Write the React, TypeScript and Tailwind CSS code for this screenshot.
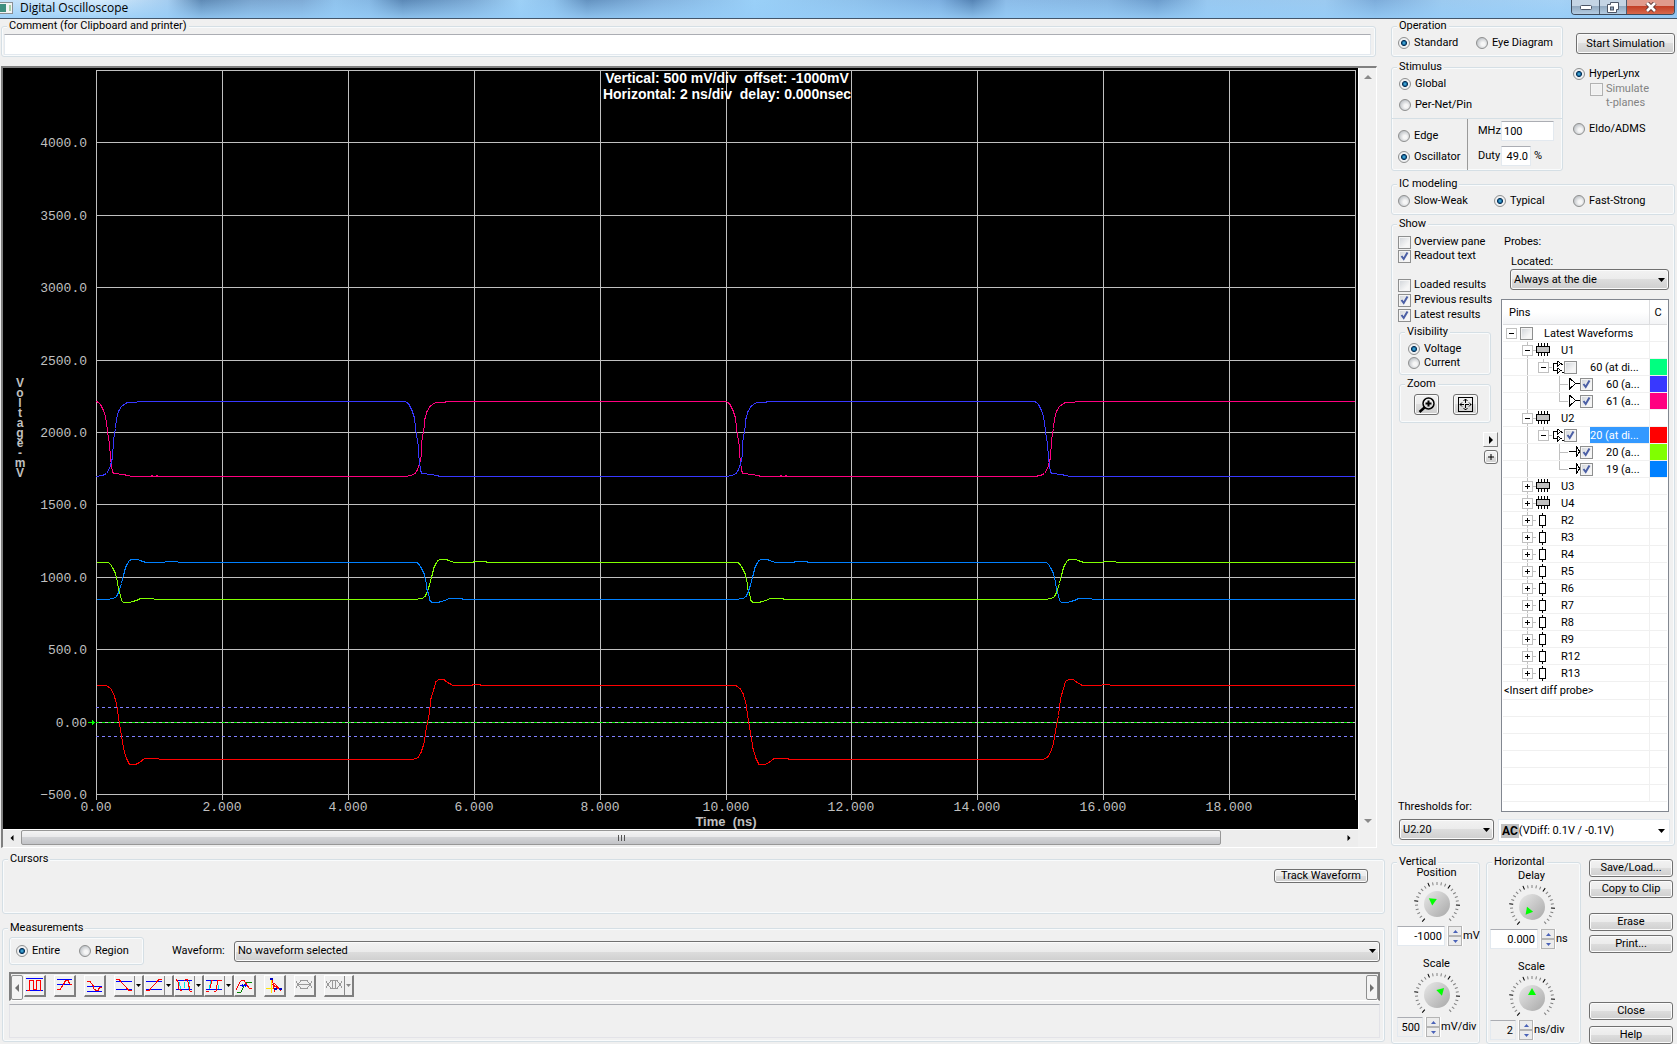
import React from 'react';
import clsx from 'clsx';

type Point = [number, number];

/* ---------- small form parts ---------- */

interface GroupProps {
  title?: string;
  className?: string;
  inner?: string;
  children?: React.ReactNode;
}

const Group: React.FC<GroupProps> = ({ title, className, inner, children }) => (
  <fieldset className={clsx('min-w-0 rounded-[3px] border border-[#d5dfe5] shadow-[inset_0_0_0_1px_#f9fbfc]', className)}>
    {title && <legend className="ml-[5px] bg-[#f0f0f0] px-0.5 leading-[14px]">{title}</legend>}
    <div className={inner}>{children}</div>
  </fieldset>
);

interface ChoiceProps {
  name?: string;
  label?: string;
  ariaLabel?: string;
  checked?: boolean;
  disabled?: boolean;
  className?: string;
}

const Radio: React.FC<ChoiceProps> = ({ name, label, checked, className }) => (
  <label className={clsx('flex h-[14px] shrink-0 items-center gap-1 whitespace-nowrap', className)}>
    <input
      type="radio"
      name={name}
      defaultChecked={checked}
      className="size-3 shrink-0 appearance-none rounded-full border border-[#8e8f8f] bg-[radial-gradient(circle_at_60%_60%,#f6f6f6_20%,#c4c8cc_70%)] checked:bg-[radial-gradient(circle,#5cc8ee_0,#0d5c93_26%,#0b2c4c_38%,#eef0f2_46%)]"
    />
    {label}
  </label>
);

const Check: React.FC<ChoiceProps> = ({ label, ariaLabel, checked, disabled, className }) => (
  <label className={clsx('flex items-center gap-[3px] whitespace-nowrap', disabled && 'text-[#838383]', className)}>
    <span className="grid size-[13px] shrink-0">
      <input
        type="checkbox"
        aria-label={ariaLabel}
        defaultChecked={checked}
        disabled={disabled}
        className="peer col-start-1 row-start-1 size-[13px] appearance-none border border-[#8e8f8f] bg-[linear-gradient(135deg,#cfd3d8,#f6f6f6_70%)] shadow-[inset_0_0_0_1px_#f4f4f4] disabled:border-[#b1b1b1] disabled:bg-none"
      />
      <svg viewBox="0 0 13 13" className="pointer-events-none invisible col-start-1 row-start-1 size-[13px] peer-checked:visible">
        <path d="M3.5 6 L5.700 9 L9.500 2.500" fill="none" stroke="#4b5fa5" strokeWidth="2" />
      </svg>
    </span>
    {label}
  </label>
);

interface ButtonProps {
  className?: string;
  ariaLabel?: string;
  children?: React.ReactNode;
}

const Button: React.FC<ButtonProps> = ({ className, ariaLabel, children }) => (
  <button
    aria-label={ariaLabel}
    className={clsx(
      'flex items-center justify-center whitespace-nowrap rounded-[3px] border border-[#707070] bg-[linear-gradient(#f2f2f2,#ebebeb_50%,#dddddd_50%,#cfcfcf)] shadow-[inset_0_0_0_1px_#fbfbfb]',
      className
    )}
  >
    {children}
  </button>
);

interface DropDownProps {
  id?: string;
  ariaLabel?: string;
  value: string;
  flat?: boolean;
  className?: string;
}

const DropDown: React.FC<DropDownProps> = ({ id, ariaLabel, value, flat, className }) => (
  <div className={clsx('grid h-[21px]', className)}>
    <select
      id={id}
      aria-label={ariaLabel}
      className={clsx(
        'col-start-1 row-start-1 h-full w-full min-w-0 appearance-none',
        flat
          ? 'bg-white'
          : 'rounded-[3px] border border-[#707070] bg-[linear-gradient(#f2f2f2,#ebebeb_50%,#dddddd_50%,#cfcfcf)] pl-[3px] shadow-[inset_0_0_0_1px_#fbfbfb]'
      )}
    >
      <option>{value}</option>
    </select>
    <svg viewBox="0 0 7 4" className="pointer-events-none col-start-1 row-start-1 mr-1 h-1 w-[7px] place-self-center justify-self-end">
      <path d="M0 0H7L3.5 4Z" />
    </svg>
  </div>
);

/* ---------- waveform plot ---------- */

const PLOT_W = 1355;
const PLOT_H = 761;
const LEFT = 93;
const RIGHT = 1352;
const PERIOD = 629.5;
const HIGH_TIME = 308.5;

const GRID_X = [93, 219, 345, 471, 597, 723, 848, 974, 1100, 1226, 1352];
const GRID_Y = [2, 74, 147, 219, 292, 364, 436, 509, 581, 654, 726];
const Y_LABELS = ['', '4000.0', '3500.0', '3000.0', '2500.0', '2000.0', '1500.0', '1000.0', '500.0', '0.00', '−500.0'];
const X_LABELS = ['0.00', '2.000', '4.000', '6.000', '8.000', '10.000', '12.000', '14.000', '16.000', '18.000'];

const DRIVER_FALL: Point[] = [[0, 333], [2, 334], [4, 336], [5, 338], [7, 342], [9, 348], [10, 354], [11, 363], [13, 375], [14, 389], [15, 397], [16, 403], [17, 405], [27, 406], [31, 407], [36, 408]];
const DRIVER_RISE: Point[] = [[0, 408], [6, 407], [10, 405], [12, 402], [14, 397], [16, 389], [17, 372], [19, 360], [20, 350], [22, 343], [25, 338], [29, 335], [31, 334], [40, 334], [41, 333]];
const PIN_FALL: Point[] = [[0, 494], [12, 494], [14, 496], [16, 499], [19, 505], [21, 513], [22, 521], [24, 527], [25, 532], [27, 534], [33, 534], [36, 533], [40, 532], [44, 530], [57, 530], [58, 531]];
const PIN_RISE: Point[] = [[0, 531], [10, 531], [17, 530], [20, 528], [22, 524], [25, 515], [27, 507], [29, 499], [31, 495], [33, 492], [35, 491], [41, 491], [44, 492], [46, 493], [50, 494], [68, 494], [69, 493], [81, 493], [82, 494]];
const DIFF_FALL: Point[] = [[0, 617], [10, 617], [14, 620], [17, 625], [20, 635], [22, 649], [25, 667], [27, 680], [30, 690], [33, 696], [39, 696], [43, 694], [48, 690], [62, 690], [63, 691]];
const DIFF_RISE: Point[] = [[0, 691], [8, 691], [13, 689], [16, 684], [19, 675], [21, 662], [24, 647], [26, 630], [29, 620], [31, 613], [34, 611], [39, 611], [41, 613], [48, 617], [67, 617], [68, 616], [75, 616], [76, 617]];

// edges alternate: first at every period start, second after the high time
const trace = (first: Point[], second: Point[]) => {
  const pts: string[] = [];
  for (let k = 0; k < 2; k++) {
    const start = LEFT + k * PERIOD;
    first.forEach(([x, y]) => pts.push(`${start + x + 0.5},${y + 0.5}`));
    second.forEach(([x, y]) => pts.push(`${start + HIGH_TIME + x + 0.5},${y + 0.5}`));
  }
  const last = second[second.length - 1];
  pts.push(`${RIGHT},${last[1] + 0.5}`);
  return pts.join(' ');
};

const TRACES = [
  { color: '#ff0080', points: trace(DRIVER_FALL, DRIVER_RISE) },
  { color: '#3838ff', points: trace(DRIVER_RISE, DRIVER_FALL) },
  { color: '#80ff00', points: trace(PIN_FALL, PIN_RISE) },
  { color: '#0080ff', points: trace(PIN_RISE, PIN_FALL) },
  { color: '#ff0000', points: trace(DIFF_FALL, DIFF_RISE) },
];

const Plot: React.FC = () => (
  <svg viewBox={`0 0 ${PLOT_W} ${PLOT_H}`} className="block w-full bg-black">
    <g stroke="#c0c0c0" shapeRendering="crispEdges">
      {GRID_X.map(x => <line key={x} x1={x + 0.5} x2={x + 0.5} y1="2" y2="732" />)}
      {GRID_Y.map(y => <line key={y} x1={LEFT} x2={RIGHT} y1={y + 0.5} y2={y + 0.5} />)}
    </g>
    <g fill="none" shapeRendering="crispEdges">
      <path d={`M${LEFT} 639.5H${RIGHT}M${LEFT} 668.5H${RIGHT}`} stroke="#8080ff" strokeDasharray="3 3" />
      <path d={`M${LEFT} 654.5H${RIGHT}`} stroke="#00ff00" strokeDasharray="3 3" />
      <path d="M85 654.5H92M89.5 652V657M90.5 653V656" stroke="#00ff00" />
      {TRACES.map(t => <polyline key={t.color} points={t.points} stroke={t.color} />)}
      <path d="M148 407.5h2M153 407.5h2M777 407.5h2M782 407.5h2" stroke="#ff0080" />
    </g>
    <g fill="#c0c0c0" className="font-['Liberation_Mono',monospace] text-[13px]">
      {GRID_Y.map((y, i) => <text key={y} x="84" y={y + 5} textAnchor="end">{Y_LABELS[i]}</text>)}
      {X_LABELS.map((label, i) => <text key={label} x={GRID_X[i]} y="743" textAnchor="middle">{label}</text>)}
    </g>
    <g fill="#c0c0c0" textAnchor="middle" className="font-['Liberation_Sans',sans-serif] text-[13px] font-bold">
      {'Voltage-mV'.split('').map((ch, i) => <text key={i} x="17" y={319 + i * 10} className="text-[12px]">{ch}</text>)}
      <text x="723" y="758">{'Time\u00a0 (ns)'}</text>
    </g>
    <g fill="#ffffff" textAnchor="middle" className="font-['Liberation_Sans',sans-serif] text-[14px] font-bold">
      <text x="724" y="15">{'Vertical: 500 mV/div\u00a0 offset: -1000mV'}</text>
      <text x="724" y="31">{'Horizontal: 2 ns/div\u00a0 delay: 0.000nsec'}</text>
    </g>
  </svg>
);

/* ---------- measurement toolbar ---------- */

interface Tool {
  name: string;
  split?: boolean;
  gap?: boolean;
  muted?: boolean;
  art: { d: string; color: string }[];
}

const TOOLS: Tool[] = [
  { name: 'Peak to peak', gap: true, art: [{ d: 'M1 2.5H18M1 14.5H18', color: '#0000ff' }, { d: 'M2 14.5H4.500V4.500H8.500V13.500H11.500V4.500H15.500V14.500', color: '#ff0000' }] },
  { name: 'Overshoot high', gap: true, art: [{ d: 'M2 3.5H17M2 8.500H17', color: '#0000ff' }, { d: 'M2 13.5H5L9 7.5L10.500 4.500H13L14.500 7.5L17 9', color: '#ff0000' }] },
  { name: 'Overshoot low', gap: true, art: [{ d: 'M2 10.5H17M2 15.5H17', color: '#0000ff' }, { d: 'M2 5.5H5L8 9.5L9 13L11 14.5H13L14.5 11.5L17 11', color: '#ff0000' }] },
  { name: 'Fall time', split: true, art: [{ d: 'M1 5.5H17M1 13.500H17', color: '#0000ff' }, { d: 'M1 3.500H4L14 14.5H17', color: '#ff0000' }] },
  { name: 'Rise time', split: true, art: [{ d: 'M1 5.5H17M1 13.500H17', color: '#0000ff' }, { d: 'M1 14.5H4L14 3.5H17', color: '#ff0000' }] },
  { name: 'Period', split: true, art: [{ d: 'M4.500 6L5.500 14M9 6V12M14.500 5L13 14', color: '#00e8e8' }, { d: 'M1 4.500H17M1 13.5H17', color: '#0000ff' }, { d: 'M1 3L3 6L4 13L7 15M9 5L11 3H12L13 6L15 15H17', color: '#ff0000' }] },
  { name: 'Pulse width', split: true, art: [{ d: 'M5.500 5L4.500 13M12.500 5L13.500 13', color: '#00e8e8' }, { d: 'M1 4.500H17M1 13.5H17', color: '#0000ff' }, { d: 'M1 15H4M5 12L7 4H8M9 15H11L13 4H17', color: '#ff0000' }] },
  { name: 'Delay', gap: true, art: [{ d: 'M2 16H6L9 10L12 6H17', color: '#008000' }, { d: 'M5 9.5H12M7 8V11M10 8V11', color: '#0000ff' }, { d: 'M1 14L5 6L7 4H9L12 9L14 12H17', color: '#ff0000' }] },
  { name: 'Crossing', gap: true, art: [{ d: 'M6.500 3V17M1 12.500H17', color: '#ffe600' }, { d: 'M7 3L10 16L8 9L14 13M9 7L16 15', color: '#ff0000' }, { d: 'M5 2.500H8M5 3.500H8M9 12.500H12M9 13.500H12M14 12.500H17M14 13.500H17', color: '#0000c0' }] },
  { name: 'Eye width', gap: true, muted: true, art: [{ d: 'M1 5L3 8.500L1 12M17 5L15 8.500L17 12M3 8.500L6 4.500H12L15 8.500L12 12.500H6L3 8.500M4 8.5H14', color: '#9a9a9a' }] },
  { name: 'Eye height', split: true, muted: true, art: [{ d: 'M1 5L3 8.500L1 12M17 5L15 8.500L17 12M3 8.500L6 4.500H12L15 8.500L12 12.500H6L3 8.500M7.500 5V12M10.500 5V12', color: '#9a9a9a' }] },
];

const ToolButton: React.FC<{ tool: Tool }> = ({ tool }) => (
  <button
    aria-label={tool.name}
    className={clsx(
      'flex h-[22px] border-r-2 border-b-2 border-[#7f7f7f] border-t border-l border-t-white border-l-white',
      tool.split ? 'w-[30px]' : 'w-[22px]',
      tool.gap && 'mr-2'
    )}
  >
    <svg viewBox="0 0 19 19" className="size-[19px] shrink-0" shapeRendering="crispEdges" fill="none">
      {tool.art.map(a => <path key={a.d} d={a.d} stroke={a.color} />)}
    </svg>
    {tool.split && (
      <svg viewBox="0 0 8 19" className="h-[19px] w-2 shrink-0">
        <path d="M0.500 0V19" stroke="#8a8a8a" />
        <path d="M2 8H7L4.500 11Z" fill={tool.muted ? '#888888' : '#000000'} />
      </svg>
    )}
  </button>
);

/* ---------- probe tree ---------- */

type Icon = 'chip' | 'diff' | 'out' | 'in' | 'res';

interface Pin {
  level: number;
  label: string;
  icon?: Icon;
  open?: boolean;
  leaf?: boolean;
  end?: boolean;
  check?: boolean;
  color?: string;
  selected?: boolean;
}

const PINS: Pin[] = [
  { level: 0, label: 'Latest Waveforms', open: true, check: false },
  { level: 1, label: 'U1', icon: 'chip', open: true },
  { level: 2, label: '60 (at di...', icon: 'diff', open: true, check: false, color: '#00ff80' },
  { level: 3, label: '60 (a...', icon: 'out', leaf: true, check: true, color: '#3838ff' },
  { level: 3, label: '61 (a...', icon: 'out', leaf: true, end: true, check: true, color: '#ff0080' },
  { level: 1, label: 'U2', icon: 'chip', open: true },
  { level: 2, label: '20 (at di...', icon: 'diff', open: true, check: true, color: '#ff0000', selected: true },
  { level: 3, label: '20 (a...', icon: 'in', leaf: true, check: true, color: '#80ff00' },
  { level: 3, label: '19 (a...', icon: 'in', leaf: true, end: true, check: true, color: '#0080ff' },
  { level: 1, label: 'U3', icon: 'chip' },
  { level: 1, label: 'U4', icon: 'chip' },
  ...['R2', 'R3', 'R4', 'R5', 'R6', 'R7', 'R8', 'R9', 'R12', 'R13'].map(label => ({ level: 1, label, icon: 'res' as Icon })),
];

const ICONS: Record<Icon, React.ReactNode> = {
  chip: (
    <svg viewBox="0 0 14 17" className="h-[17px] w-[14px] shrink-0" shapeRendering="crispEdges">
      <path d="M2.500 1V14M5.500 1V14M8.500 1V14M11.500 1V14" stroke="#000" />
      <rect x="0.500" y="4.500" width="13" height="6" fill="#c0c0c0" stroke="#000" />
    </svg>
  ),
  res: (
    <svg viewBox="0 0 14 17" className="h-[17px] w-[14px] shrink-0" shapeRendering="crispEdges">
      <path d="M6.500 1V4M6.500 14V17" stroke="#000" />
      <rect x="3.500" y="3.500" width="6" height="10" fill="#fff" stroke="#000" />
    </svg>
  ),
  diff: (
    <svg viewBox="0 0 12 17" className="h-[17px] w-3 shrink-0" shapeRendering="crispEdges">
      <path d="M6 4.500H1.500V11.500H6M5.500 2V7L9 4.500L5.500 2M5.500 9V14L9 11.500L5.500 9M9 5.500H11M10 13.500H12" fill="none" stroke="#000" />
    </svg>
  ),
  out: (
    <svg viewBox="0 0 12 17" className="h-[17px] w-3 shrink-0" shapeRendering="crispEdges">
      <path d="M1.500 2V13L7.500 7.500L1.500 2M8 7.500H12" fill="none" stroke="#000" />
    </svg>
  ),
  in: (
    <svg viewBox="0 0 12 17" className="h-[17px] w-3 shrink-0" shapeRendering="crispEdges">
      <path d="M1 7.500H8M8.500 2V13L11.500 7.500L8.500 2" fill="none" stroke="#000" />
    </svg>
  ),
};

const ROW_GUIDES = [
  '', // Latest Waveforms
  'M24.500 0V17M29 8.500H33',
  'M24.500 0V17M40.500 0V8M45 8.500H49',
  'M24.500 0V17M56.500 0V17M56 8.500H65',
  'M24.500 0V17M56.500 0V8.500H65',
];

const PinLead: React.FC<{ pin: Pin }> = ({ pin }) => {
  const width = 17 + pin.level * 16;
  const box = 3.5 + pin.level * 16;
  const guide = pin.leaf && pin.end ? ROW_GUIDES[4] : ROW_GUIDES[pin.level];
  return (
    <svg viewBox={`0 0 ${width} 17`} className="h-[17px] shrink-0" shapeRendering="crispEdges" fill="none">
      <path d={guide} stroke="#c0c0c0" />
      {!pin.leaf && (
        <>
          <rect x={box} y="3.5" width="10" height="10" fill="#fff" stroke="#c0c0c0" />
          <path d={pin.open ? `M${box + 2.5} 8.500H${box + 7.5}` : `M${box + 2.5} 8.500H${box + 7.5}M${box + 5} 6V11`} stroke="#000" />
        </>
      )}
    </svg>
  );
};

const EMPTY_ROWS = [0, 1, 2, 3, 4, 5];

const PinTable: React.FC = () => (
  <div className="h-[513px] w-[168px] overflow-hidden border border-[#828790] bg-white px-px">
    <table className="w-full table-fixed border-collapse">
      <colgroup>
        <col />
        <col className="w-[18px]" />
      </colgroup>
      <thead>
        <tr className="h-6 bg-[linear-gradient(#ffffff,#ffffff_50%,#f3f4f6)]">
          <th className="border-r border-b border-[#dcdddf] p-0 pl-1.5 pt-0.5 text-left font-normal">Pins</th>
          <th className="border-b border-[#dcdddf] p-0 pl-[5px] pt-0.5 text-left font-normal">C</th>
        </tr>
      </thead>
      <tbody>
        {PINS.map(pin => (
          <tr key={pin.label} className="h-[17px]">
            <td className="overflow-hidden border-r border-b border-[#f0f0f0] p-0">
              <div className="-mb-px flex h-[17px] items-center">
                <PinLead pin={pin} />
                {pin.icon && ICONS[pin.icon]}
                {pin.check !== undefined && <Check checked={pin.check} ariaLabel={`Show ${pin.label}`} />}
                <span
                  className={clsx(
                    'h-4 flex-1 whitespace-nowrap leading-[17px]',
                    pin.level > 1 ? 'ml-[13px]' : 'ml-[11px]',
                    pin.selected && 'bg-[#3399ff] text-white'
                  )}
                >
                  {pin.label}
                </span>
              </div>
            </td>
            <td className="border-b border-[#f0f0f0] p-0" style={pin.color ? { backgroundColor: pin.color } : undefined} />
          </tr>
        ))}
        <tr className="h-[17px]">
          <td className="overflow-hidden border-r border-b border-[#f0f0f0] p-0 pl-px pt-px leading-4 whitespace-nowrap">&lt;Insert diff probe&gt;</td>
          <td className="border-b border-[#f0f0f0] p-0" />
        </tr>
        {EMPTY_ROWS.map(i => (
          <tr key={i} className="h-[17px]">
            <td className="border-r border-b border-[#f0f0f0] p-0" />
            <td className="border-b border-[#f0f0f0] p-0" />
          </tr>
        ))}
      </tbody>
    </table>
  </div>
);

/* ---------- knobs ---------- */

const TICKS = Array.from({ length: 25 }, (_, i) => -140 + (i * 280) / 24);

const Knob: React.FC<{ angle: number }> = ({ angle }) => (
  <svg viewBox="-24 -24 48 46" className="h-[46px] w-12 shrink-0">
    <defs>
      <linearGradient id="knob" x1="0" y1="0" x2="1" y2="1">
        <stop offset="0" stopColor="#e8e8e8" />
        <stop offset="1" stopColor="#a8a8a8" />
      </linearGradient>
    </defs>
    {TICKS.map((t, i) => (
      <line key={t} y1={-19} y2={i % 5 === 0 ? -23 : -22} transform={`rotate(${t})`} stroke={i % 5 === 0 ? '#000000' : '#808080'} />
    ))}
    <circle r="13" fill="url(#knob)" />
    <path d="M0 -10L4 -3H-4Z" fill="#00ff00" transform={`rotate(${angle})`} />
  </svg>
);

interface DialProps {
  title: string;
  angle: number;
  value: string;
  unit: string;
  wide?: boolean;
  locked?: boolean;
}

const Dial: React.FC<DialProps> = ({ title, angle, value, unit, wide, locked }) => {
  const id = `${title}-${unit}`.toLowerCase().replace('/', '-');
  return (
    <div className="flex flex-col items-center">
      <label htmlFor={id} className="leading-[14px]">{title}</label>
      <Knob angle={angle} />
      <div className="flex w-full items-center pl-[3px]">
        <input
          id={id}
          readOnly={locked}
          defaultValue={value}
          className={clsx(
            'h-5 shrink-0 border border-[#e3e9ef] border-t-[#abadb3] pr-0.5 text-right',
            wide ? 'w-12' : 'w-[26px]',
            locked ? 'bg-[#f0f0f0]' : 'bg-white'
          )}
        />
        <div className="ml-0.5 flex shrink-0 flex-col bg-white px-px">
          <button aria-label={`${title} up`} className="flex h-[10px] w-[14px] items-center justify-center border border-[#b4b4b4] bg-[#ececec]">
            <svg viewBox="0 0 5 3" className="h-[3px] w-[5px]"><path d="M0 3H5L2.500 0Z" fill="#4a62b8" /></svg>
          </button>
          <button aria-label={`${title} down`} className="flex h-[10px] w-[14px] items-center justify-center border border-[#b4b4b4] bg-[#ececec]">
            <svg viewBox="0 0 5 3" className="h-[3px] w-[5px]"><path d="M0 0H5L2.500 3Z" fill="#4a62b8" /></svg>
          </button>
        </div>
        <span>{unit}</span>
      </div>
    </div>
  );
};

/* ---------- page ---------- */

const TitleBar: React.FC = () => (
  <header className="flex h-[19px] items-start justify-between overflow-hidden border-b border-[#43566b] bg-[linear-gradient(rgba(150,205,248,0),rgba(150,205,248,0.8)),linear-gradient(90deg,#c4e1f8_0,#d4ebfc_6%,#a5cdf0_10%,#5f8ab5_12%,#7ba6d0_15%,#7fabd6_18%,#8fc2ec_20%,#86b8e4_22%,#5b88b6_24%,#7ba9d4_28%,#9dd0f6_31%,#8fc2ec_33%,#6492c0_35%,#83b2de_39%,#9ad0f8_45%,#8fc2ec_51%,#7dafe0_56%,#5583b4_58%,#8cbce8_60%,#86b6e2_66%,#6c9ccc_69%,#98c8f0_72%,#9ccaf0_79%,#7dacda_82%,#9ccaf0_86%,#a5d2f6_93%,#8ab8e4_100%)]">
    <div className="flex h-[15px] items-center gap-[7px]">
      <svg viewBox="0 0 13 12" className="h-3 w-[13px]">
        <rect width="13" height="12" fill="#8a8f94" />
        <rect y="1" width="12" height="10" fill="#f4f4f4" />
        <rect y="2" width="6" height="8" fill="#3f8f80" />
        <rect x="9" y="3" width="2" height="6" fill="#a8d0a8" />
      </svg>
      <h1 className="font-['Open_Sans',sans-serif] text-[12px]">Digital Oscilloscope</h1>
    </div>
    <div className="mr-0.5 flex h-[15px] overflow-hidden rounded-b-[4px] border border-t-0 border-[#3c4a5c]">
      <button aria-label="Minimize" className="flex w-7 items-center justify-center border-r border-[#4c5c70] bg-[linear-gradient(#c4d4e4_40%,#8fa6bd_40%,#b4cce2)]">
        <svg viewBox="0 0 12 5" className="h-[5px] w-3"><rect x="0.500" y="0.500" width="11" height="4" rx="1" fill="#fff" stroke="#4c5566" /></svg>
      </button>
      <button aria-label="Restore" className="flex w-[27px] items-center justify-center border-r border-[#4c5c70] bg-[linear-gradient(#c4d4e4_40%,#8fa6bd_40%,#b4cce2)]">
        <svg viewBox="0 0 12 11" className="h-[11px] w-3">
          <path d="M3.500 0.500H11.500V7.500H9.500V10.500H0.500V2.500H3.500Z" fill="#fff" stroke="#4c5566" />
          <rect x="3.500" y="5" width="3" height="3" fill="#8fa6bd" stroke="#4c5566" />
        </svg>
      </button>
      <button aria-label="Close window" className="flex w-[47px] items-center justify-center bg-[linear-gradient(#e09a8c_40%,#c03a22_40%,#d8694c)]">
        <svg viewBox="0 0 12 11" className="h-[11px] w-3">
          <path d="M2 1L10 9M10 1L2 9" stroke="#5a3434" strokeWidth="4.5" />
          <path d="M2 1L10 9M10 1L2 9" stroke="#fff" strokeWidth="2.600" />
        </svg>
      </button>
    </div>
  </header>
);

const Arrow: React.FC<{ d: string; className?: string }> = ({ d, className = 'size-1.5' }) => (
  <svg viewBox="0 0 8 8" className={className}>
    <path d={d} fill="currentColor" />
  </svg>
);

const LEFT_ARROW = 'M6 0V8L2 4Z';
const RIGHT_ARROW = 'M2 0V8L6 4Z';
const UP_ARROW = 'M0 6H8L4 2Z';
const DOWN_ARROW = 'M0 2H8L4 6Z';

const App: React.FC = () => (
  <div className="bg-[#f0f0f0] font-['Roboto','Liberation_Sans',sans-serif] text-[11px] leading-[14px] text-black">
    <TitleBar />
    <main className="flex">
      <div className="min-w-0 flex-1">
        <Group title="Comment (for Clipboard and printer)" className="ml-px mr-[11px] h-[38px]" inner="pl-0.5 pr-1">
          <input
            aria-label="Comment"
            className="mt-px block h-[21px] w-full border border-[#e3e9ef] border-t-[#abadb3] bg-white px-1"
          />
        </Group>

        <div className="ml-px mr-[10px] mt-[9px] border-2 border-r border-b border-[#808080] border-r-white border-b-white">
          <div className="flex">
            <div className="min-w-0 flex-1">
              <Plot />
            </div>
            <div className="flex w-[18px] flex-col justify-between border-l border-white bg-[#f0f0f0] text-[#8a8a8a]">
              <button aria-label="Scroll up" className="flex h-[17px] items-center justify-center"><Arrow d={UP_ARROW} className="size-2" /></button>
              <button aria-label="Scroll down" className="flex h-[17px] items-center justify-center"><Arrow d={DOWN_ARROW} className="size-2" /></button>
            </div>
          </div>
          <div className="mr-[18px] flex h-[18px] items-start border-t border-white bg-[#ededed]">
            <button aria-label="Scroll left" className="flex h-4 w-[18px] items-center justify-center"><Arrow d={LEFT_ARROW} /></button>
            <div className="min-w-0 flex-1">
              <div className="flex h-[15px] w-[91%] items-center justify-center gap-0.5 rounded-[2px] border border-[#979797] bg-[linear-gradient(#f4f4f4,#e8e8ea_50%,#d2d3d6_50%,#c2c3c7)]">
                <span className="h-1.5 w-px bg-[#555]" />
                <span className="h-1.5 w-px bg-[#555]" />
                <span className="h-1.5 w-px bg-[#555]" />
              </div>
            </div>
            <button aria-label="Scroll right" className="flex h-4 w-[18px] items-center justify-center"><Arrow d={RIGHT_ARROW} /></button>
          </div>
        </div>

        <Group title="Cursors" className="mx-0.5 mt-1 h-[62px]">
          <Button className="ml-auto mr-4 mt-[3px] h-[14px] w-[94px]">Track Waveform</Button>
        </Group>

        <Group title="Measurements" className="mx-0.5 mt-[7px] h-[121px]" inner="pl-1.5 pr-1 pt-0.5">
          <div className="flex items-center">
            <Group className="w-[135px]" inner="flex h-[26px] items-center pl-1.5">
              <Radio name="range" label="Entire" checked className="w-[63px]" />
              <Radio name="range" label="Region" />
            </Group>
            <label htmlFor="waveform" className="ml-7 mr-2 w-[54px]">Waveform:</label>
            <DropDown id="waveform" value="No waveform selected" className="flex-1" />
          </div>
          <div className="mt-[7px] flex h-[29px] items-start border-2 border-b border-r-[#808080] border-b-white border-l-[#808080] border-t-[#808080] pt-px">
            <button aria-label="Previous tools" className="mr-px flex h-[25px] w-3 items-center justify-center rounded-[2px] border border-[#8e8f8f] bg-[#f4f4f4] text-[#707070]">
              <Arrow d={LEFT_ARROW} className="size-2" />
            </button>
            {TOOLS.map(tool => <ToolButton key={tool.name} tool={tool} />)}
            <button aria-label="More tools" className="ml-auto flex h-[25px] w-3 items-center justify-center rounded-[2px] border border-[#8e8f8f] bg-[#f4f4f4] text-[#707070]">
              <Arrow d={RIGHT_ARROW} className="size-2" />
            </button>
          </div>
          <div className="mt-[3px] h-[34px] border border-[#e3e3e8] border-t-[#abadb3]" />
        </Group>
      </div>

      <div className="w-[290px] shrink-0 pl-1 pr-0.5">
        <div className="flex justify-between">
          <div className="w-[172px]">
            <Group title="Operation" className="h-[38px]" inner="flex pl-1.5 pt-[3px]">
              <Radio name="operation" label="Standard" checked className="w-[78px]" />
              <Radio name="operation" label="Eye Diagram" />
            </Group>
            <Group title="Stimulus" className="mt-[3px] h-[111px]">
              <div className="flex h-[44px] flex-col gap-[7px] pl-[7px] pt-[3px]">
                <Radio name="scope" label="Global" checked />
                <Radio name="scope" label="Per-Net/Pin" />
              </div>
              <div className="flex h-[52px] border-t border-[#d5dfe5]">
                <div className="flex w-[76px] flex-col gap-[7px] border-r border-[#9a9a9a] pl-1.5 pt-[10px]">
                  <Radio name="source" label="Edge" />
                  <Radio name="source" label="Oscillator" checked />
                </div>
                <div className="flex flex-col gap-[5px] pl-2.5 pt-0.5">
                  <label className="flex h-5 items-center">
                    <span className="w-[23px]">MHz</span>
                    <input defaultValue="100" className="h-5 w-[53px] border border-[#e3e9ef] border-t-[#abadb3] bg-white px-0.5" />
                  </label>
                  <label className="flex h-5 items-center">
                    <span className="w-[23px]">Duty</span>
                    <input defaultValue="49.0" className="h-5 w-[30px] border border-[#e3e9ef] border-t-[#abadb3] bg-white pr-0.5 text-right" />
                    <span className="ml-[3px]">%</span>
                  </label>
                </div>
              </div>
            </Group>
          </div>
          <div className="w-[99px] pt-3.5">
            <Button className="h-[21px] w-full">Start Simulation</Button>
            <div className="pt-[13px]">
              <Radio name="engine" label="HyperLynx" checked className="-ml-[3px]" />
              <Check label="Simulate" disabled className="ml-3.5 mt-px" />
              <p className="ml-[30px] text-[#838383]">t-planes</p>
              <Radio name="engine" label="Eldo/ADMS" className="-ml-[3px] mt-3" />
            </div>
          </div>
        </div>

        <Group title="IC modeling" className="mt-1.5 h-[38px]" inner="flex pl-1.5 pt-[3px]">
          <Radio name="ic" label="Slow-Weak" className="w-24" />
          <Radio name="ic" label="Typical" checked className="w-[79px]" />
          <Radio name="ic" label="Fast-Strong" />
        </Group>

        <Group title="Show" className="mt-[2px] h-[629px]" inner="pl-1.5">
          <div className="flex h-[569px]">
            <div className="flex w-[93px] flex-col pt-1">
              <Check label="Overview pane" />
              <Check label="Readout text" checked />
              <Check label="Loaded results" className="mt-[15px]" />
              <Check label="Previous results" checked className="mt-px" />
              <Check label="Latest results" checked className="mt-px" />
              <Group title="Visibility" className="ml-px mt-[3px] h-[50px]" inner="flex flex-col pl-2 pt-[3px]">
                <Radio name="visibility" label="Voltage" checked />
                <Radio name="visibility" label="Current" />
              </Group>
              <Group title="Zoom" className="ml-px mt-0.5 h-[46px]" inner="flex gap-3.5 pl-3.5 pt-[3px]">
                <Button ariaLabel="Zoom in" className="h-[21px] w-[25px]">
                  <svg viewBox="0 0 18 16" className="h-4 w-[18px]" fill="none" stroke="#000">
                    <circle cx="10.500" cy="6.500" r="5.500" strokeWidth="1.500" />
                    <path d="M6.500 10.500L1.500 15" strokeWidth="2.500" />
                    <path d="M7.500 6.500H13.500M10.500 3.500V9.500" strokeWidth="2" />
                  </svg>
                </Button>
                <Button ariaLabel="Fit to window" className="h-[21px] w-[25px]">
                  <svg viewBox="0 0 15 15" className="size-[15px]" fill="none" stroke="#000">
                    <rect x="0.500" y="0.500" width="14" height="14" />
                    <path d="M7.500 2V13M2 7.500H13" strokeDasharray="4 1" />
                    <path d="M5.500 4L7.500 2L9.500 4M5.500 11L7.500 13L9.500 11M4 5.500L2 7.500L4 9.500M11 5.500L13 7.500L11 9.500" />
                  </svg>
                </Button>
              </Group>
              <div className="-mr-[7px] mt-[9px] flex flex-col items-end gap-[3px]">
                <button aria-label="Expand" className="flex size-[15px] items-center justify-center border border-r-[#808080] border-b-[#808080] border-t-white border-l-white">
                  <Arrow d={RIGHT_ARROW} className="size-2" />
                </button>
                <Button ariaLabel="Add" className="size-[14px]">
                  <svg viewBox="0 0 6 6" className="size-1.5" stroke="#000"><path d="M0 3H6M3 0V6" /></svg>
                </Button>
              </div>
            </div>
            <div className="min-w-0 flex-1 pl-[10px]">
              <p className="pl-[3px] pt-1">Probes:</p>
              <label htmlFor="located" className="mt-1.5 block pl-2.5">Located:</label>
              <DropDown id="located" value="Always at the die" className="ml-[9px] w-[159px]" />
              <div className="mt-[9px]">
                <PinTable />
              </div>
            </div>
          </div>
          <label htmlFor="thresholds" className="block">Thresholds for:</label>
          <div className="mt-[5px] flex gap-1 pl-px">
            <DropDown id="thresholds" value="U2.20" className="w-[95px]" />
            <div className="mr-1 flex flex-1 items-center border border-[#e3e9ef] bg-white pl-0.5">
              <span className="bg-[#c0c0c0] px-px text-[12px] font-bold">AC</span>
              <DropDown ariaLabel="Threshold levels" value="(VDiff: 0.1V / -0.1V)" flat className="min-w-0 flex-1" />
            </div>
          </div>
        </Group>

        <div className="mt-[9px] flex">
          <Group title="Vertical" className="h-[189px] w-[89px]" inner="-mt-[3px] flex flex-col gap-[11px] pl-0.5">
            <Dial title="Position" angle={-55} value="-1000" unit="mV" wide />
            <Dial title="Scale" angle={45} value="500" unit="mV/div" locked />
          </Group>
          <Group title="Horizontal" className="ml-1.5 h-[189px] w-[95px]" inner="flex flex-col gap-[11px] pr-1">
            <Dial title="Delay" angle={-140} value="0.000" unit="ns" wide />
            <Dial title="Scale" angle={0} value="2" unit="ns/div" locked />
          </Group>
          <div className="ml-2 flex w-[84px] flex-col pt-1">
            <Button className="h-[18px]">Save/Load...</Button>
            <Button className="mt-[3px] h-[18px]">Copy to Clip</Button>
            <Button className="mt-[15px] h-[18px]">Erase</Button>
            <Button className="mt-1 h-[18px]">Print...</Button>
            <Button className="mt-[49px] h-[18px]">Close</Button>
            <Button className="mt-1.5 h-[18px]">Help</Button>
          </div>
        </div>
      </div>
    </main>
  </div>
);

export default App;
